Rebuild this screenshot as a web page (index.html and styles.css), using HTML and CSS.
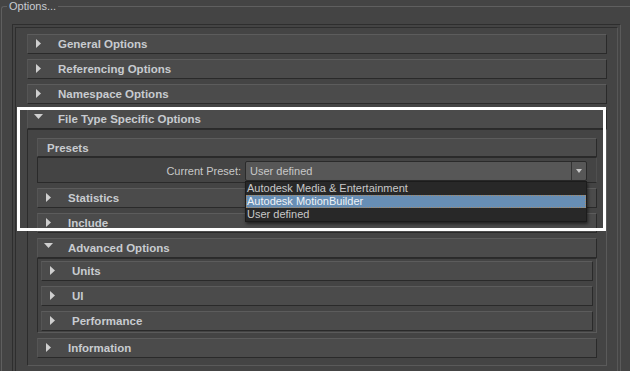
FILE: index.html
```html
<!DOCTYPE html>
<html>
<head>
<meta charset="utf-8">
<link rel="stylesheet" href="styles.css">
</head>
<body>
<fieldset class="options">
  <legend class="options-legend">Options...</legend>
  <div class="scroll">
    <div class="scroll-inner">
      <div class="fl">
        <div class="hdr"><svg class="tri" viewBox="0 0 9 9"><polygon points="2,0 7,4.5 2,9"/></svg><span class="title">General Options</span></div>
      </div>
      <div class="fl">
        <div class="hdr"><svg class="tri" viewBox="0 0 9 9"><polygon points="2,0 7,4.5 2,9"/></svg><span class="title">Referencing Options</span></div>
      </div>
      <div class="fl">
        <div class="hdr"><svg class="tri" viewBox="0 0 9 9"><polygon points="2,0 7,4.5 2,9"/></svg><span class="title">Namespace Options</span></div>
      </div>
      <div class="fl">
        <div class="hdr"><svg class="tri" viewBox="0 0 9 9"><polygon points="0,0 9,0 4.5,5"/></svg><span class="title">File Type Specific Options</span></div>
        <div class="body body-ft">
          <div class="fl">
            <div class="hdr hdr-plain"><span class="title">Presets</span></div>
            <div class="body body-presets">
              <span class="lbl">Current Preset:</span>
              <div class="combo">
                <span class="combo-text">User defined</span>
                <span class="combo-btn"><span class="combo-arrow"></span></span>
                <ul class="dropdown">
                  <li class="item">Autodesk Media &amp; Entertainment</li>
                  <li class="item sel">Autodesk MotionBuilder</li>
                  <li class="item">User defined</li>
                </ul>
              </div>
            </div>
          </div>
          <div class="fl">
            <div class="hdr"><svg class="tri" viewBox="0 0 9 9"><polygon points="2,0 7,4.5 2,9"/></svg><span class="title">Statistics</span></div>
          </div>
          <div class="fl">
            <div class="hdr"><svg class="tri" viewBox="0 0 9 9"><polygon points="2,0 7,4.5 2,9"/></svg><span class="title">Include</span></div>
          </div>
          <div class="fl">
            <div class="hdr"><svg class="tri" viewBox="0 0 9 9"><polygon points="0,0 9,0 4.5,5"/></svg><span class="title">Advanced Options</span></div>
            <div class="body body-adv">
              <div class="fl">
                <div class="hdr"><svg class="tri" viewBox="0 0 9 9"><polygon points="2,0 7,4.5 2,9"/></svg><span class="title">Units</span></div>
              </div>
              <div class="fl">
                <div class="hdr"><svg class="tri" viewBox="0 0 9 9"><polygon points="2,0 7,4.5 2,9"/></svg><span class="title">UI</span></div>
              </div>
              <div class="fl">
                <div class="hdr"><svg class="tri" viewBox="0 0 9 9"><polygon points="2,0 7,4.5 2,9"/></svg><span class="title">Performance</span></div>
              </div>
            </div>
          </div>
          <div class="fl">
            <div class="hdr"><svg class="tri" viewBox="0 0 9 9"><polygon points="2,0 7,4.5 2,9"/></svg><span class="title">Information</span></div>
          </div>
        </div>
      </div>
    </div>
  </div>
</fieldset>
<div class="annot"></div>
</body>
</html>
```
FILE: styles.css
```css
html, body {
  margin: 0;
  padding: 0;
  height: 100%;
  overflow: hidden;
}
body {
  background: #444444;
  font-family: "Liberation Sans", Arial, sans-serif;
  font-size: 11px;
  color: #c8c8c8;
  position: relative;
}
.options {
  margin: 0 0 0 1px;
  border: 1px solid #5f5f5f;
  border-right: 0;
  border-bottom: 0;
  border-radius: 3px 0 0 0;
  padding: 12px 9px 0 10px;
  min-width: 0;
}
.options-legend {
  margin-left: -5px;
  padding: 0 2px;
  font-size: 11px;
  line-height: 12px;
  color: #c9ccd2;
}
.scroll {
  border: 1px solid;
  border-color: #2e2e2e #5a5a5a #5a5a5a #2e2e2e;
  border-bottom: 0;
  padding: 2px 2px 0 2px;
}
.scroll-inner {
  border: 1px solid;
  border-color: #2e2e2e #575757 #575757 #2e2e2e;
  border-bottom: 0;
  padding: 6px 10px 5px 11px;
  display: flex;
  flex-direction: column;
  gap: 5px;
}
.fl {
  display: flex;
  flex-direction: column;
}
.hdr {
  box-sizing: border-box;
  height: 20px;
  background: #4b4b4b;
  border-top: 1px solid #5c5c5c;
  border-left: 1px solid #555555;
  border-bottom: 1px solid #2a2a2a;
  border-right: 1px solid #2a2a2a;
  display: flex;
  align-items: center;
  padding-left: 6px;
}
.hdr-plain {
  height: 19px;
  padding-left: 9px;
}
.title {
  font-weight: bold;
  font-size: 11.5px;
  color: #c8cbd0;
  white-space: nowrap;
}
.tri {
  width: 9px;
  height: 9px;
  margin-right: 15px;
  margin-top: -2px;
  flex: none;
  fill: #cfcfcf;
}
.body {
  box-sizing: border-box;
  border: 1px solid;
  border-color: #2c2c2c #5a5a5a #5a5a5a #2c2c2c;
}
.body-ft {
  display: flex;
  flex-direction: column;
  gap: 5px;
  padding: 8px 9px 7px 9px;
}
.body-adv {
  display: flex;
  flex-direction: column;
  gap: 5px;
  padding: 2px 3px 1px 3px;
}
.body-presets {
  height: 26px;
  display: grid;
  grid-template-columns: 203px 1fr;
  column-gap: 4px;
  align-items: center;
  padding: 3px 9px 1px 0;
  border-color: #2a2a2a #4f4f4f #2a2a2a #2a2a2a;
}
.lbl {
  text-align: right;
  white-space: nowrap;
  color: #c8c8c8;
}
.combo {
  position: relative;
  box-sizing: border-box;
  height: 20px;
  border: 1px solid #2a2a2a;
  border-radius: 2px;
  background: #575757;
  display: flex;
  align-items: center;
}
.combo-text {
  flex: 1;
  padding-left: 4px;
  color: #c8c8c8;
  white-space: nowrap;
}
.combo-btn {
  width: 14px;
  height: 100%;
  border-left: 1px solid #333333;
  display: flex;
  align-items: center;
  justify-content: center;
}
.combo-arrow {
  border-top: 4px solid #c8c8c8;
  border-left: 3.5px solid transparent;
  border-right: 3.5px solid transparent;
}
.dropdown {
  position: absolute;
  top: calc(100% + 1px);
  left: -1px;
  right: -1px;
  margin: 0;
  padding: 0;
  list-style: none;
  border: 1px solid #1c1c1c;
  background: #282828;
  box-shadow: 1px 2px 3px rgba(0, 0, 0, 0.55);
  z-index: 5;
}
.item {
  height: 13px;
  line-height: 13px;
  padding-left: 1px;
  white-space: nowrap;
  color: #c8c8c8;
}
.item.sel {
  background: #678eb5;
  color: #eef2f6;
  outline: 1px dotted #a88a66;
  outline-offset: -1px;
}
.annot {
  position: absolute;
  left: 17px;
  top: 107px;
  width: 589px;
  height: 124px;
  box-sizing: border-box;
  border: 3px solid #ffffff;
  pointer-events: none;
  z-index: 10;
}
```
